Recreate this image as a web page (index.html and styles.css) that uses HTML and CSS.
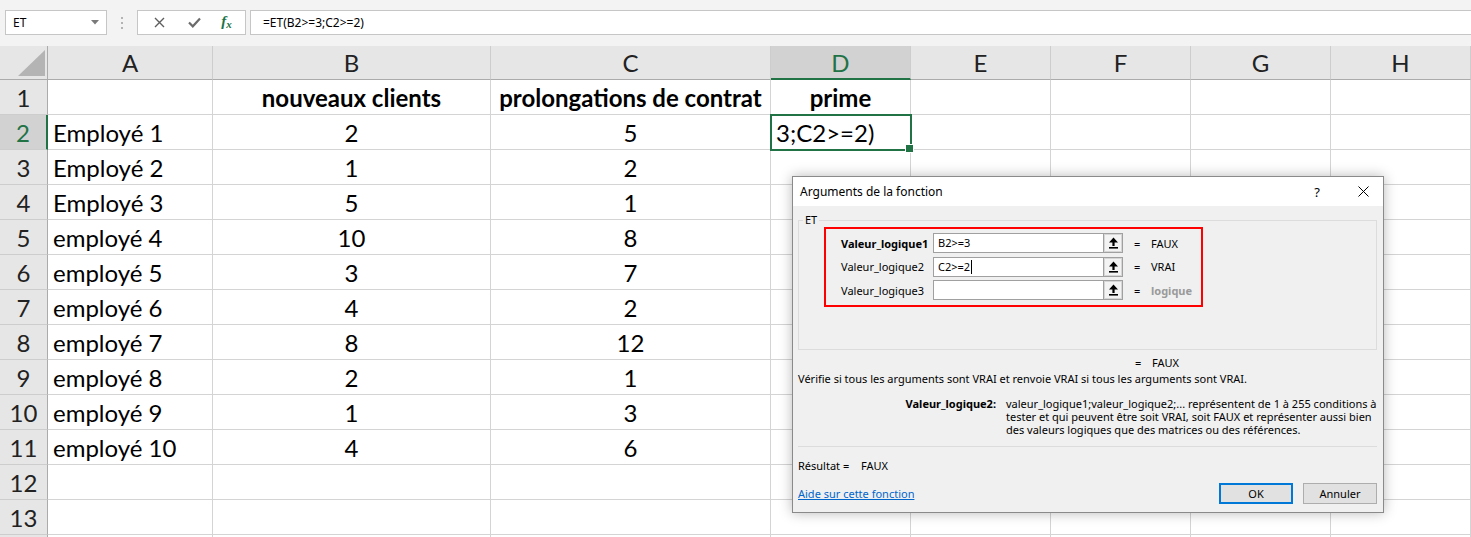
FILE: index.html
```html
<!DOCTYPE html>
<html lang="fr">
<head>
<meta charset="utf-8">
<title>Excel - ET</title>
<link rel="stylesheet" href="styles.css">
</head>
<body>
<div class="app">
  <div class="fbar">
    <div class="namebox"><span>ET</span><svg width="8" height="5" viewBox="0 0 8 5"><path d="M0 0H8L4 4.5Z" fill="#7a7a7a"/></svg></div>
    <div class="grip"><i></i><i></i><i></i></div>
    <div class="fbtns">
      <span class="fb fb-x"><svg width="11" height="11" viewBox="0 0 11 11"><path d="M1 1L10 10M10 1L1 10" stroke="#5e5e5e" stroke-width="1.4"/></svg></span>
      <span class="fb fb-ok"><svg width="13" height="11" viewBox="0 0 13 11"><path d="M1 5.5L4.8 9.3L12 1.6" stroke="#6b6b6b" stroke-width="2.2" fill="none"/></svg></span>
      <span class="fb fx">f<span class="fxx">x</span></span>
    </div>
    <div class="formula">=ET(B2&gt;=3;C2&gt;=2)</div>
  </div>

  <div class="sheet">
    <div class="ch corner"><svg width="27" height="26" viewBox="0 0 27 26"><path d="M27 0V26H0Z" fill="#b4b4b4"/></svg></div>
    <div class="ch">A</div><div class="ch">B</div><div class="ch">C</div><div class="ch chsel">D</div><div class="ch">E</div><div class="ch">F</div><div class="ch">G</div><div class="ch">H</div>

    <div class="rh">1</div><div class="c"></div><div class="c n b">nouveaux clients</div><div class="c n b">prolongations de contrat</div><div class="c n b">prime</div><div class="c"></div><div class="c"></div><div class="c"></div><div class="c"></div>
    <div class="rh rhsel">2</div><div class="c">Employé 1</div><div class="c n">2</div><div class="c n">5</div><div class="c active">3;C2&gt;=2)</div><div class="c"></div><div class="c"></div><div class="c"></div><div class="c"></div>
    <div class="rh">3</div><div class="c">Employé 2</div><div class="c n">1</div><div class="c n">2</div><div class="c"></div><div class="c"></div><div class="c"></div><div class="c"></div><div class="c"></div>
    <div class="rh">4</div><div class="c">Employé 3</div><div class="c n">5</div><div class="c n">1</div><div class="c"></div><div class="c"></div><div class="c"></div><div class="c"></div><div class="c"></div>
    <div class="rh">5</div><div class="c">employé 4</div><div class="c n">10</div><div class="c n">8</div><div class="c"></div><div class="c"></div><div class="c"></div><div class="c"></div><div class="c"></div>
    <div class="rh">6</div><div class="c">employé 5</div><div class="c n">3</div><div class="c n">7</div><div class="c"></div><div class="c"></div><div class="c"></div><div class="c"></div><div class="c"></div>
    <div class="rh">7</div><div class="c">employé 6</div><div class="c n">4</div><div class="c n">2</div><div class="c"></div><div class="c"></div><div class="c"></div><div class="c"></div><div class="c"></div>
    <div class="rh">8</div><div class="c">employé 7</div><div class="c n">8</div><div class="c n">12</div><div class="c"></div><div class="c"></div><div class="c"></div><div class="c"></div><div class="c"></div>
    <div class="rh">9</div><div class="c">employé 8</div><div class="c n">2</div><div class="c n">1</div><div class="c"></div><div class="c"></div><div class="c"></div><div class="c"></div><div class="c"></div>
    <div class="rh">10</div><div class="c">employé 9</div><div class="c n">1</div><div class="c n">3</div><div class="c"></div><div class="c"></div><div class="c"></div><div class="c"></div><div class="c"></div>
    <div class="rh">11</div><div class="c">employé 10</div><div class="c n">4</div><div class="c n">6</div><div class="c"></div><div class="c"></div><div class="c"></div><div class="c"></div><div class="c"></div>
    <div class="rh">12</div><div class="c"></div><div class="c"></div><div class="c"></div><div class="c"></div><div class="c"></div><div class="c"></div><div class="c"></div><div class="c"></div>
    <div class="rh">13</div><div class="c"></div><div class="c"></div><div class="c"></div><div class="c"></div><div class="c"></div><div class="c"></div><div class="c"></div><div class="c"></div>
    <div class="rh"></div><div class="c"></div><div class="c"></div><div class="c"></div><div class="c"></div><div class="c"></div><div class="c"></div><div class="c"></div><div class="c"></div>
  </div>

  <div class="dialog">
    <div class="dtitle">
      <span class="dt">Arguments de la fonction</span>
      <span class="dq">?</span>
      <span class="dx"><svg width="11" height="11" viewBox="0 0 11 11"><path d="M0.5 0.5L10.5 10.5M10.5 0.5L0.5 10.5" stroke="#000" stroke-width="1"/></svg></span>
    </div>
    <div class="dbody">
      <fieldset class="grp">
        <legend>ET</legend>
        <div class="args">
          <div class="arg">
            <span class="alabel strong">Valeur_logique1</span>
            <span class="ainput">B2&gt;=3</span>
            <span class="aref"><svg width="11" height="12" viewBox="0 0 11 12"><path d="M5.5 0.5L10 5.5H6.6V9H4.4V5.5H1Z" fill="#000"/><rect x="1" y="10" width="9" height="1.6" fill="#000"/></svg></span>
            <span class="aeq">=</span><span class="aval">FAUX</span>
          </div>
          <div class="arg">
            <span class="alabel">Valeur_logique2</span>
            <span class="ainput">C2&gt;=2<i class="caret"></i></span>
            <span class="aref"><svg width="11" height="12" viewBox="0 0 11 12"><path d="M5.5 0.5L10 5.5H6.6V9H4.4V5.5H1Z" fill="#000"/><rect x="1" y="10" width="9" height="1.6" fill="#000"/></svg></span>
            <span class="aeq">=</span><span class="aval">VRAI</span>
          </div>
          <div class="arg">
            <span class="alabel">Valeur_logique3</span>
            <span class="ainput"></span>
            <span class="aref"><svg width="11" height="12" viewBox="0 0 11 12"><path d="M5.5 0.5L10 5.5H6.6V9H4.4V5.5H1Z" fill="#000"/><rect x="1" y="10" width="9" height="1.6" fill="#000"/></svg></span>
            <span class="aeq">=</span><span class="aval muted">logique</span>
          </div>
        </div>
      </fieldset>
      <div class="res1"><span class="aeq">=</span><span>FAUX</span></div>
      <p class="desc">Vérifie si tous les arguments sont VRAI et renvoie VRAI si tous les arguments sont VRAI.</p>
      <div class="help">
        <span class="hlabel">Valeur_logique2:</span>
        <span class="htext">valeur_logique1;valeur_logique2;... représentent de 1 à 255 conditions à<br>tester et qui peuvent être soit VRAI, soit FAUX et représenter aussi bien<br>des valeurs logiques que des matrices ou des références.</span>
      </div>
      <div class="sep"></div>
      <div class="result"><span class="rlabel">Résultat =</span><span>FAUX</span></div>
      <div class="foot">
        <a class="hlink" href="#">Aide sur cette fonction</a>
        <div class="btns"><button class="btn ok">OK</button><button class="btn">Annuler</button></div>
      </div>
    </div>
  </div>
</div>
</body>
</html>
```

FILE: styles.css
```css
* { box-sizing: border-box; }
html, body { margin: 0; padding: 0; }
body { width: 1471px; height: 537px; overflow: hidden; background: #fff; font-family: Lato, "Liberation Sans", sans-serif; }
.app { position: relative; width: 1471px; height: 537px; overflow: hidden; }

/* formula bar */
.fbar { height: 46px; background: #f3f3f3; display: flex; align-items: flex-start; padding: 10px 0 0 5px; font-family: "Noto Sans", sans-serif; font-size: 12px; color: #000; }
.namebox { width: 102px; height: 25px; background: #fff; border: 1px solid #c6c6c6; display: flex; align-items: center; justify-content: space-between; padding: 0 7px 0 7px; }
.grip { width: 30px; height: 25px; display: flex; flex-direction: column; align-items: center; justify-content: center; gap: 3px; }
.grip i { display: block; width: 2px; height: 2px; background: #b3b3b3; }
.fbtns { width: 109px; height: 25px; background: #fff; border: 1px solid #c6c6c6; display: flex; align-items: center; }
.fb { display: flex; align-items: center; justify-content: center; height: 100%; }
.fb-x { width: 42px; }
.fb-ok { width: 28px; }
.fx { flex: 1; font-family: "Liberation Serif", serif; font-style: italic; font-weight: bold; font-size: 15px; color: #217346; padding-bottom: 2px; }
.fxx { font-size: 11px; position: relative; top: 2px; }
.formula { flex: 1; height: 25px; margin-left: 4px; background: #fff; border: 1px solid #c6c6c6; border-right: none; padding-left: 12px; line-height: 23px; }

/* sheet */
.sheet { display: grid; grid-template-columns: 48px 165px 278px 280px 140px 140px 140px 140px 140px; grid-template-rows: 34px repeat(14, 35px); }
.c { border-right: 1px solid #d4d4d4; border-bottom: 1px solid #d4d4d4; display: flex; align-items: center; padding: 0 0 0 5px; font-size: 24px; color: #000; white-space: nowrap; }
.c.n { justify-content: center; padding: 0; }
.c.b { font-weight: bold; }
.ch { background: #e6e6e6; border-right: 1px solid #cdcdcd; border-bottom: 1px solid #ababab; display: flex; align-items: center; justify-content: center; font-size: 24px; color: #222; }
.ch.corner { align-items: flex-end; justify-content: flex-end; padding: 0 2px 3px 0; border-right: 1px solid #ababab; }
.ch.chsel { background: #d2d2d2; color: #217346; border-bottom: 2px solid #217346; }
.rh { background: #e6e6e6; border-right: 1px solid #ababab; border-bottom: 1px solid #cdcdcd; display: flex; align-items: center; justify-content: center; font-size: 24px; color: #222; }
.rh.rhsel { background: #d2d2d2; color: #217346; border-right: 2px solid #217346; }
.active { position: relative; outline: 2px solid #217346; outline-offset: -1px; z-index: 1; }
.active::after { content: ""; position: absolute; right: -4px; bottom: -4px; width: 7px; height: 7px; background: #217346; border: 1px solid #fff; }

/* dialog */
.dialog { position: absolute; left: 792px; top: 176px; width: 592px; height: 337px; background: #f0f0f0; border: 1px solid #8a8a8a; box-shadow: 0 0 12px rgba(0,0,0,0.28); font-family: "Noto Sans", sans-serif; font-size: 11px; color: #000; z-index: 5; }
.dtitle { height: 29px; background: #fff; display: flex; align-items: center; padding-left: 7px; font-size: 12px; }
.dt { flex: 1; }
.dq { width: 20px; text-align: center; margin-right: 25px; font-size: 13px; }
.dx { width: 22px; display: flex; justify-content: center; margin-right: 9px; }
.dbody { padding: 0 6px 0 5px; }
.grp { margin: 6px 0 0; padding: 0; border: 1px solid #dcdcdc; height: 138px; min-width: 0; }
.grp legend { font-size: 11px; line-height: 16px; padding: 0 2px; margin-left: 4px; }
.args { margin: -1px 0 0 25px; width: 379px; height: 80px; border: 2px solid #ff0000; padding: 4px 0 0 15px; display: flex; flex-direction: column; gap: 3.5px; }
.arg { display: flex; align-items: center; height: 20px; }
.alabel { width: 92px; }
.strong { font-weight: bold; }
.ainput { width: 171px; height: 20px; background: #fff; border: 1px solid #a0a0a0; padding-left: 4px; line-height: 18px; display: flex; align-items: center; }
.caret { display: inline-block; width: 1px; height: 14px; background: #000; margin-left: 1px; }
.aref { width: 20px; height: 20px; background: #f3f3f3; border: 1px solid #a0a0a0; box-shadow: inset 0 0 0 1px #d6d6d6; display: flex; align-items: center; justify-content: center; margin-left: -1px; }
.aeq { width: 17px; margin-left: 11px; }
.muted { color: #9a9a9a; font-weight: bold; }
.res1 { margin-top: 5px; line-height: 16px; padding-left: 337px; display: flex; }
.res1 .aeq { margin-left: 0; }
.desc { margin: 0; line-height: 16px; }
.help { margin-top: 10px; display: flex; line-height: 13px; }
.hlabel { width: 198px; text-align: right; font-weight: bold; flex: none; }
.htext { margin-left: 10px; }
.sep { margin-top: 10px; height: 1px; background: #dcdcdc; }
.result { margin-top: 11px; line-height: 16px; display: flex; }
.rlabel { width: 63px; }
.foot { margin-top: 9px; height: 21px; display: flex; align-items: center; justify-content: space-between; }
.hlink { color: #0066cc; text-decoration: underline; }
.btns { display: flex; gap: 10px; }
.btn { width: 74px; height: 21px; background: #e1e1e1; border: 1px solid #adadad; font-family: "Noto Sans", sans-serif; font-size: 11px; color: #000; padding: 0; }
.btn.ok { border: 2px solid #0078d7; }
```
